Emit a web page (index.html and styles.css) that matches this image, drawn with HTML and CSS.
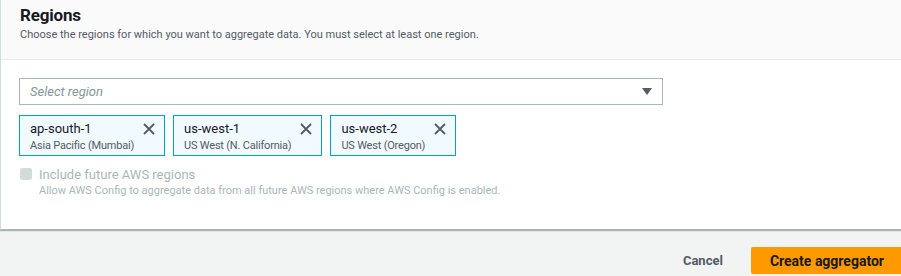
FILE: index.html
```html
<!DOCTYPE html>
<html lang="en">
<head>
    <meta charset="UTF-8">
    <meta name="viewport" content="width=device-width, initial-scale=1.0">
    <title>Regions</title>
    <link rel="stylesheet" href="styles.css">
</head>
<body>
    <div class="page">
        <div class="panel">
            <div class="panel-header">
                <h2>Regions</h2>
                <p>Choose the regions for which you want to aggregate data. You must select at least one region.</p>
            </div>
            <div class="panel-body">
                <div class="select">
                    <span class="placeholder">Select region</span>
                    <span class="caret"></span>
                </div>
                <div class="tokens">
                    <div class="token">
                        <div class="token-text">
                            <div class="token-name">ap-south-1</div>
                            <div class="token-desc">Asia Pacific (Mumbai)</div>
                        </div>
                        <svg class="token-close" width="12" height="12" viewBox="0 0 12 12"><path d="M1 1L11 11M11 1L1 11" stroke="#545b64" stroke-width="1.8" fill="none"/></svg>
                    </div>
                    <div class="token">
                        <div class="token-text">
                            <div class="token-name">us-west-1</div>
                            <div class="token-desc">US West (N. California)</div>
                        </div>
                        <svg class="token-close" width="12" height="12" viewBox="0 0 12 12"><path d="M1 1L11 11M11 1L1 11" stroke="#545b64" stroke-width="1.8" fill="none"/></svg>
                    </div>
                    <div class="token">
                        <div class="token-text">
                            <div class="token-name">us-west-2</div>
                            <div class="token-desc">US West (Oregon)</div>
                        </div>
                        <svg class="token-close" width="12" height="12" viewBox="0 0 12 12"><path d="M1 1L11 11M11 1L1 11" stroke="#545b64" stroke-width="1.8" fill="none"/></svg>
                    </div>
                </div>
                <div class="check">
                    <span class="box"></span>
                    <div>
                        <div class="check-label">Include future AWS regions</div>
                        <div class="check-desc">Allow AWS Config to aggregate data from all future AWS regions where AWS Config is enabled.</div>
                    </div>
                </div>
            </div>
        </div>
        <div class="actions">
            <button class="cancel">Cancel</button>
            <button class="primary">Create aggregator</button>
        </div>
    </div>
</body>
</html>
```

FILE: styles.css
```css
body {
    margin: 0;
    padding: 0;
    background-color: #f2f3f3;
    font-family: Roboto, "Noto Sans", sans-serif;
    color: #16191f;
    overflow: hidden;
}
.page {
    width: 903px;
}
.panel {
    background: #ffffff;
    border-left: 1px solid #d5dbdb;
    border-bottom: 1px solid #aab7b8;
    box-shadow: 0 1px 1px rgba(0, 28, 36, 0.3);
}
.panel-header {
    background: #fafafa;
    border-bottom: 1px solid #eaeded;
    padding: 4px 19px 16px;
}
.panel-header h2 {
    margin: 0;
    font-size: 17px;
    line-height: 22px;
    font-weight: bold;
    letter-spacing: -0.2px;
}
.panel-header p {
    margin: 1px 0 0;
    font-size: 11px;
    line-height: 16px;
    color: #545b64;
}
.panel-body {
    padding: 18px 19px 29px 18px;
}
.select {
    width: 622px;
    height: 25px;
    border: 1px solid #aab7b8;
    display: flex;
    align-items: center;
    justify-content: space-between;
    padding: 0 10px;
}
.placeholder {
    font-style: italic;
    color: #879596;
    font-size: 13px;
}
.caret {
    width: 0;
    height: 0;
    border-left: 5px solid transparent;
    border-right: 5px solid transparent;
    border-top: 7px solid #545b64;
}
.tokens {
    display: flex;
    gap: 8px;
    margin-top: 10px;
}
.token {
    display: flex;
    align-items: flex-start;
    gap: 9px;
    background: #f1faff;
    border: 1px solid #00a1c9;
    padding: 4px 9px 2px 10px;
}
.token-name {
    font-size: 13px;
    line-height: 18px;
}
.token-desc {
    font-size: 11px;
    line-height: 15px;
    color: #545b64;
    letter-spacing: -0.2px;
}
.token-close {
    margin-top: 3px;
}
.check {
    display: flex;
    gap: 7px;
    margin-top: 11px;
    padding-left: 1px;
}
.box {
    width: 12px;
    height: 12px;
    border-radius: 2px;
    background: #d5dbdb;
    margin-top: 1px;
    flex: none;
}
.check-label {
    font-size: 13px;
    line-height: 15px;
    color: #aab7b8;
}
.check-desc {
    font-size: 11px;
    line-height: 18px;
    color: #aab7b8;
}
.actions {
    display: flex;
    justify-content: flex-end;
    align-items: center;
    gap: 12px;
    padding: 17px 0 0;
}
button {
    font-family: inherit;
    font-size: 14px;
    font-weight: bold;
    border: none;
    cursor: pointer;
}
.cancel {
    background: none;
    color: #545b64;
    font-size: 13px;
    padding: 4px 16px;
}
.primary {
    background: #ff9900;
    color: #16191f;
    height: 27px;
    padding: 0 19px;
    border-radius: 2px;
}
```
